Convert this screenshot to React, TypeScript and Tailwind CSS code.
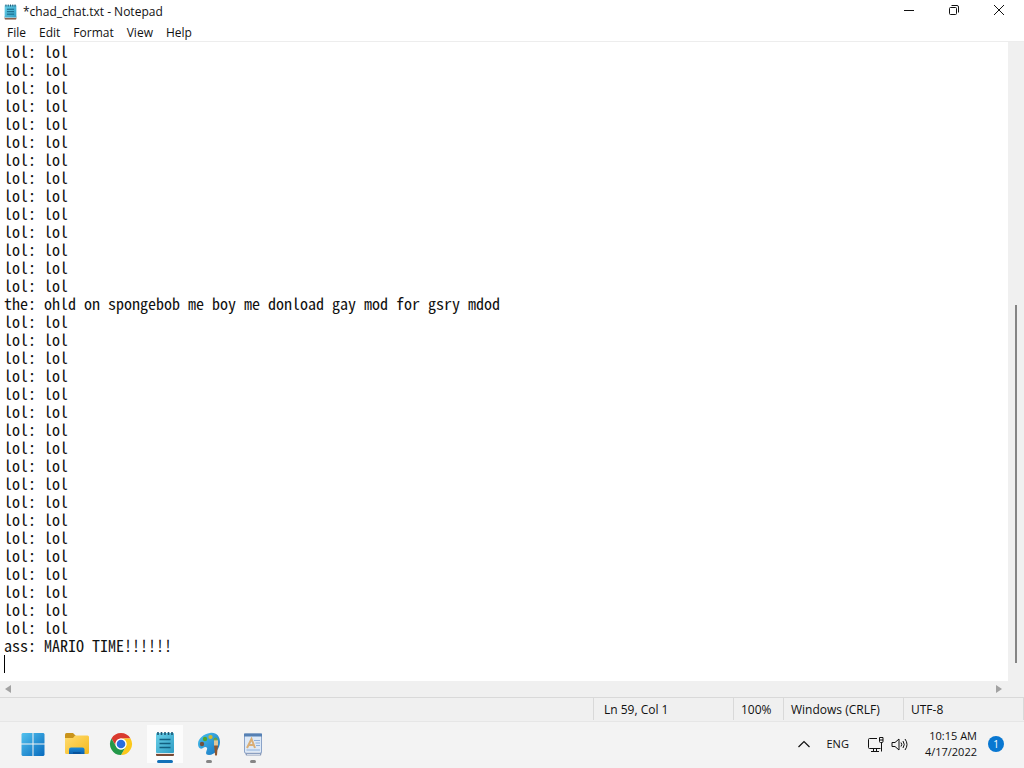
import type { ReactNode } from "react";

const repeat = (n: number) => Array.from({ length: n }, () => "lol: lol");

const initialText = [
  ...repeat(14),
  "the: ohld on spongebob me boy me donload gay mod for gsry mdod",
  ...repeat(18),
  "ass: MARIO TIME!!!!!!",
  "",
].join("\n");

function NotepadIcon({ className }: { className: string }) {
  return (
    <svg viewBox="0 0 20 26" className={className} preserveAspectRatio="none" aria-hidden="true">
      <defs>
        <linearGradient id="pad" x1="0" y1="0" x2="1" y2="1">
          <stop offset="0" stopColor="#6ad0e8" />
          <stop offset="1" stopColor="#2f9dc4" />
        </linearGradient>
      </defs>
      <rect x="1" y="20" width="18" height="5" rx="1" fill="#7a4a35" />
      <rect x="1" y="21" width="18" height="2" fill="#e8e4e0" />
      <rect x="1" y="2" width="18" height="20" rx="1" fill="url(#pad)" />
      <path d="M3 1v3M6.500 1v3M10 1v3M13.500 1v3M17 1v3" stroke="#1b5673" strokeWidth="1.600" />
      <path d="M4.500 8.500h11M4.500 12.500h11M4.500 16.500h11" stroke="#125f80" strokeWidth="1.500" />
    </svg>
  );
}

function WindowsLogo() {
  return (
    <svg viewBox="0 0 24 24" className="size-6" aria-hidden="true">
      <defs>
        <linearGradient id="win" gradientUnits="userSpaceOnUse" x1="0" y1="0" x2="24" y2="24">
          <stop offset="0" stopColor="#55c5f0" />
          <stop offset="1" stopColor="#0669bd" />
        </linearGradient>
      </defs>
      <path d="M1.500 1H11.500V11.500H.500V2zM12.500 1H22.500L23.500 2V11.500H12.500zM.500 12.500H11.500V24H1.500L.500 23zM12.500 12.500H23.500V23L22.500 24H12.500z" fill="url(#win)" />
    </svg>
  );
}

function FolderIcon() {
  return (
    <svg viewBox="0 0 26 24" className="h-6 w-[26px]" aria-hidden="true">
      <defs>
        <linearGradient id="folder" x1="0" y1="0" x2="1" y2="1">
          <stop offset="0" stopColor="#ffdc70" />
          <stop offset="1" stopColor="#f5b91d" />
        </linearGradient>
        <linearGradient id="stand" x1="0" y1="0" x2="0" y2="1">
          <stop offset="0" stopColor="#1c8bd8" />
          <stop offset="1" stopColor="#0a5fae" />
        </linearGradient>
      </defs>
      <path d="M1 2.500Q1 1 2.500 1H9L11.500 3.500V8H1z" fill="#c9931b" />
      <path d="M1 6H9L11 3.500H23.500Q25 3.500 25 5V20.500Q25 22 23.500 22H2.500Q1 22 1 20.500z" fill="url(#folder)" />
      <path d="M5 22V17.500Q5 15.500 7 15.500H18.500Q20.500 15.500 20.500 17.500V22z" fill="url(#stand)" />
      <path d="M9 22V20H16.500V22z" fill="#07529b" />
    </svg>
  );
}

function ChromeIcon() {
  return (
    <svg viewBox="0 0 24 24" className="size-6" aria-hidden="true">
      <circle cx="12" cy="12" r="11" fill="#fff" />
      <path d="M12 1A11 11 0 0 1 21.530 6.500H12A5.500 5.500 0 0 0 7.240 14.750L2.470 6.500A11 11 0 0 1 12 1z" fill="#d93a2e" />
      <path d="M21.530 6.500A11 11 0 0 1 12 23L16.760 14.750A5.500 5.500 0 0 0 12 6.500z" fill="#fbc81c" />
      <path d="M2.470 6.500L7.240 14.750A5.500 5.500 0 0 0 16.760 14.750L12 23A11 11 0 0 1 2.470 6.500z" fill="#239849" />
      <circle cx="12" cy="12" r="5.500" fill="#fff" />
      <circle cx="12" cy="12" r="4.300" fill="#296dde" />
    </svg>
  );
}

function PaintIcon() {
  return (
    <svg viewBox="0 0 24 26" className="h-[26px] w-6" aria-hidden="true">
      <defs>
        <linearGradient id="palette" x1="0" y1="0" x2="1" y2="1">
          <stop offset="0" stopColor="#49c3ef" />
          <stop offset="1" stopColor="#1673c0" />
        </linearGradient>
      </defs>
      <path d="M13 2C19 1 23 5 23 11C23 17 18 24 12 24C8 24 9 21 10 18.500C11 16 8 15 6 17C3 19 1 16 1 13C1 7 7 3 13 2z" fill="url(#palette)" />
      <circle cx="5" cy="13" r="2.200" fill="#75513c" />
      <circle cx="8" cy="8" r="2.200" fill="#54a52c" />
      <circle cx="13.500" cy="6" r="2.100" fill="#d6b62b" />
      <circle cx="18.500" cy="8.500" r="2" fill="#64a345" />
      <path d="M17 10L18 8.500L19 10L20 8.500L21 10V15H17z" fill="#dfc69b" />
      <path d="M17 14.500H21L20.500 18L20 24Q19 25.500 18 24L17.500 18z" fill="#91572f" />
    </svg>
  );
}

function WordPadIcon() {
  return (
    <svg viewBox="0 0 20 25" className="h-[25px] w-5" aria-hidden="true">
      <path d="M1.500 19L3 23.500H18L19 19z" fill="#8b9bb9" />
      <rect x="1.500" y="2" width="17" height="19" rx="1" fill="#dde9f7" stroke="#8ba3c8" />
      <path d="M1 1.500H19V4.500H1z" fill="#5580b4" />
      <path d="M4 16L8.500 7L12 16M5.500 13H11" fill="none" stroke="#d9ae76" strokeWidth="2" />
      <path d="M11 8.500H17M12.500 11H17M13 13.500H17M3.500 18H17" stroke="#8fb0da" />
      <path d="M3 20.500H17M4 22.500H17" stroke="#d3dae6" />
    </svg>
  );
}

function WindowButton({ label, children }: { label: string; children: ReactNode }) {
  return (
    <button type="button" aria-label={label} className="flex h-5 w-[45px] items-center justify-center">
      <svg viewBox="0 0 12 12" className="size-3" fill="none" stroke="#111" aria-hidden="true">
        {children}
      </svg>
    </button>
  );
}

function TaskButton({
  label,
  state,
  children,
}: {
  label: string;
  state?: "active" | "open";
  children: ReactNode;
}) {
  return (
    <button
      type="button"
      aria-label={label}
      className={`relative flex h-[38px] w-11 items-center justify-center ${state === "active" ? "rounded bg-[#fcfcfc] bg-clip-content px-1" : ""}`}
    >
      {children}
      {state === "active" && <span className="absolute bottom-0 left-[14px] h-[3px] w-4 rounded-full bg-[#1271b8]" />}
      {state === "open" && <span className="absolute bottom-0 left-[19px] h-[3px] w-[6px] rounded-full bg-[#858585]" />}
    </button>
  );
}

export default function App() {
  return (
    <div className="flex min-h-screen flex-col bg-white font-['Open_Sans','Noto_Sans',sans-serif] text-[12px] leading-4 text-[#111]">
      <header className="flex h-[23px] justify-between pl-1">
        <h1 className="flex items-center gap-[6px]">
          <NotepadIcon className="h-4 w-[13px]" />
          *chad_chat.txt - Notepad
        </h1>
        <div className="flex pr-[3px]">
          <WindowButton label="Minimize">
            <path d="M1 6.500H11" />
          </WindowButton>
          <WindowButton label="Restore">
            <rect x="1.500" y="3.500" width="7" height="7" rx="1" />
            <path d="M3.500 1.500H9Q10.500 1.500 10.500 3V8.500" />
          </WindowButton>
          <WindowButton label="Close">
            <path d="M1 1L11 11M11 1L1 11" />
          </WindowButton>
        </div>
      </header>

      <nav className="flex h-[19px] items-center gap-[13px] border-b border-[#ededed] pl-[7px] pt-[2px]">
        {["File", "Edit", "Format", "View", "Help"].map((item) => (
          <button type="button" key={item}>
            {item}
          </button>
        ))}
      </nav>

      <main className="flex flex-1">
        <div className="relative flex flex-1">
          <textarea
            aria-label="Document text"
            defaultValue={initialText}
            spellCheck={false}
            wrap="off"
            className="flex-1 resize-none overflow-hidden pl-1 font-['Noto_Sans_Mono_CJK_SC','Liberation_Mono',monospace] text-[16px] leading-[18px] text-[#111] outline-none"
          />
          <span className="absolute left-1 top-[613px] h-[18px] w-px bg-black" />
        </div>
        <div className="flex w-4 flex-col items-center bg-[#f0f0f0]">
          <div className="flex-[263]" />
          <div className="w-[2px] flex-[358] bg-[#858585]" />
          <div className="flex-[18]" />
        </div>
      </main>

      <div className="flex h-4 items-center justify-between bg-[#f0f0f0] pl-1 pr-[21px]">
        <button type="button" aria-label="Scroll left">
          <svg viewBox="0 0 8 10" className="h-[10px] w-2" fill="#a2a2a2" aria-hidden="true">
            <path d="M7 1V9L1 5z" />
          </svg>
        </button>
        <button type="button" aria-label="Scroll right">
          <svg viewBox="0 0 8 10" className="h-[10px] w-2" fill="#a2a2a2" aria-hidden="true">
            <path d="M1 1V9L7 5z" />
          </svg>
        </button>
      </div>

      <footer className="flex h-6 justify-end border-t border-[#d9d9d9] bg-[#f0f0f0] pb-px leading-6">
        <span className="w-[140px] border-l border-[#d9d9d9] pl-[10px]">Ln 59, Col 1</span>
        <span className="w-[50px] border-l border-[#d9d9d9] pl-[7px]">100%</span>
        <span className="w-[120px] border-l border-[#d9d9d9] pl-[7px]">Windows (CRLF)</span>
        <span className="w-[121px] border-x border-[#d9d9d9] pl-[7px]">UTF-8</span>
      </footer>

      <section aria-label="Taskbar" className="flex h-[47px] items-center justify-between border-t border-[#e6e6e6] bg-[#f3f3f3] pb-[2px] pl-[11px] pr-5">
        <div className="flex">
          <TaskButton label="Start">
            <WindowsLogo />
          </TaskButton>
          <TaskButton label="File Explorer">
            <FolderIcon />
          </TaskButton>
          <TaskButton label="Chrome">
            <ChromeIcon />
          </TaskButton>
          <TaskButton label="Notepad" state="active">
            <NotepadIcon className="h-[26px] w-5" />
          </TaskButton>
          <TaskButton label="Paint" state="open">
            <PaintIcon />
          </TaskButton>
          <TaskButton label="WordPad" state="open">
            <WordPadIcon />
          </TaskButton>
        </div>
        <div className="flex items-center">
          <button type="button" aria-label="Show hidden icons" className="mr-4">
            <svg viewBox="0 0 12 8" className="h-2 w-3" fill="none" stroke="#111" strokeWidth="1.200" aria-hidden="true">
              <path d="M.500 7L6 1.500L11.500 7" />
            </svg>
          </button>
          <button type="button" className="mr-[18px] text-[11px]">ENG</button>
          <button type="button" aria-label="Network and volume" className="mr-[17px] flex gap-[7px]">
            <svg viewBox="0 0 17 17" className="size-[17px]" fill="none" stroke="#111" aria-hidden="true">
              <path d="M10 2.500H2.500Q1.500 2.500 1.500 3.500V11.500Q1.500 12.500 2.500 12.500H13.500M4 15.500H12M6.500 12.500V15.500M9.500 12.500V15.500" />
              <path d="M12.500 1.500H16V5.500Q16 6.500 15 6.500H13.500Q12.500 6.500 12.500 5.500zM12.500 4H16M14.500 6.500V15.500" />
            </svg>
            <svg viewBox="0 0 17 17" className="size-[17px]" fill="none" stroke="#111" aria-hidden="true">
              <path d="M1 6.500H4L8 3V14L4 10.500H1z" strokeLinejoin="round" />
              <path d="M10 6.500Q11.500 8.500 10 10.500M12 5Q14.500 8.500 12 12M14 3Q18 8.500 14 14" />
            </svg>
          </button>
          <button type="button" className="text-right text-[11px] leading-4">
            10:15 AM
            <br />
            4/17/2022
          </button>
          <span className="ml-[11px] flex size-4 items-center justify-center rounded-full bg-[#0877d1] text-[10px] text-white">1</span>
        </div>
      </section>
    </div>
  );
}
